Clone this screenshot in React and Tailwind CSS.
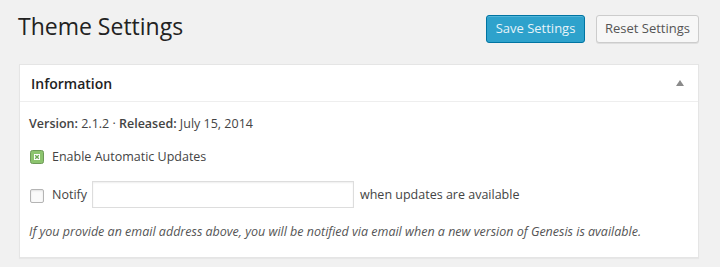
import React from "react";

const CheckedBox = () => (
    <svg width="14" height="14" viewBox="0 0 14 14" className="shrink-0">
        <rect x="0.5" y="0.5" width="13" height="13" rx="2" fill="#8cc46e" stroke="#6e9a58" />
        <rect x="4" y="4" width="6" height="6" fill="#ffffff" />
        <path d="M5.2 5.2 L8.8 8.8 M8.8 5.2 L5.2 8.8" stroke="#6ba552" strokeWidth="1.4" />
    </svg>
);

export default function App() {
    return (
        <div className="w-[720px] h-[267px] bg-[#f1f1f1] pl-[19px] pr-[21px] pt-[12px] text-[#444] font-['Open_Sans',sans-serif]">
            <div className="flex items-start justify-between">
                <h1 className="text-[23px] leading-[28px] text-[#222] -ml-[1px]">Theme Settings</h1>
                <div className="flex gap-[11px] mt-[3px]">
                    <button className="h-[28px] w-[99px] rounded-[3px] border border-[#0074a2] bg-[#2ea2cc] text-[13px] text-[#e6f3f9] shadow-[inset_0_1px_0_rgba(120,200,230,0.5)]">
                        Save Settings
                    </button>
                    <button className="h-[28px] w-[103px] rounded-[3px] border border-[#cccccc] bg-[#f7f7f7] text-[13px] text-[#555] shadow-[0_1px_0_rgba(0,0,0,0.08)]">
                        Reset Settings
                    </button>
                </div>
            </div>

            <div className="mt-[21px] bg-white border border-[#e5e5e5] shadow-[0_1px_1px_rgba(0,0,0,0.04)]">
                <div className="h-[37px] flex items-center justify-between pl-[11px] pr-[14px] border-b border-[#eeeeee]">
                    <h2 className="text-[14px] font-semibold text-[#222]">Information</h2>
                    <svg width="8" height="6" viewBox="0 0 8 6">
                        <path d="M4 0 L8 6 L0 6 Z" fill="#8a8a8a" />
                    </svg>
                </div>
                <div className="pl-[9px] pt-[12px] pb-[15px] text-[12.5px] leading-[20px]">
                    <p>
                        <b className="font-semibold">Version:</b> 2.1.2 · <b className="font-semibold">Released:</b> July 15, 2014
                    </p>
                    <label className="mt-[13px] flex items-center gap-[8px] pl-[1px]">
                        <CheckedBox />
                        <span>Enable Automatic Updates</span>
                    </label>
                    <div className="mt-[14px] flex items-center pl-[1px]">
                        <span className="w-[14px] h-[14px] mt-[3px] rounded-[2px] border border-[#b4b4b4] bg-[#fafafa] shadow-[inset_0_1px_2px_rgba(0,0,0,0.1)] shrink-0" />
                        <span className="ml-[8px]">Notify</span>
                        <input
                            type="text"
                            className="ml-[5px] w-[262px] h-[27px] border border-[#dddddd] bg-white shadow-[inset_0_1px_2px_rgba(0,0,0,0.07)] outline-none"
                        />
                        <span className="ml-[6px]">when updates are available</span>
                    </div>
                    <p className="mt-[14px] italic text-[#555]">
                        If you provide an email address above, you will be notified via email when a new version of Genesis is available.
                    </p>
                </div>
            </div>
        </div>
    );
}
